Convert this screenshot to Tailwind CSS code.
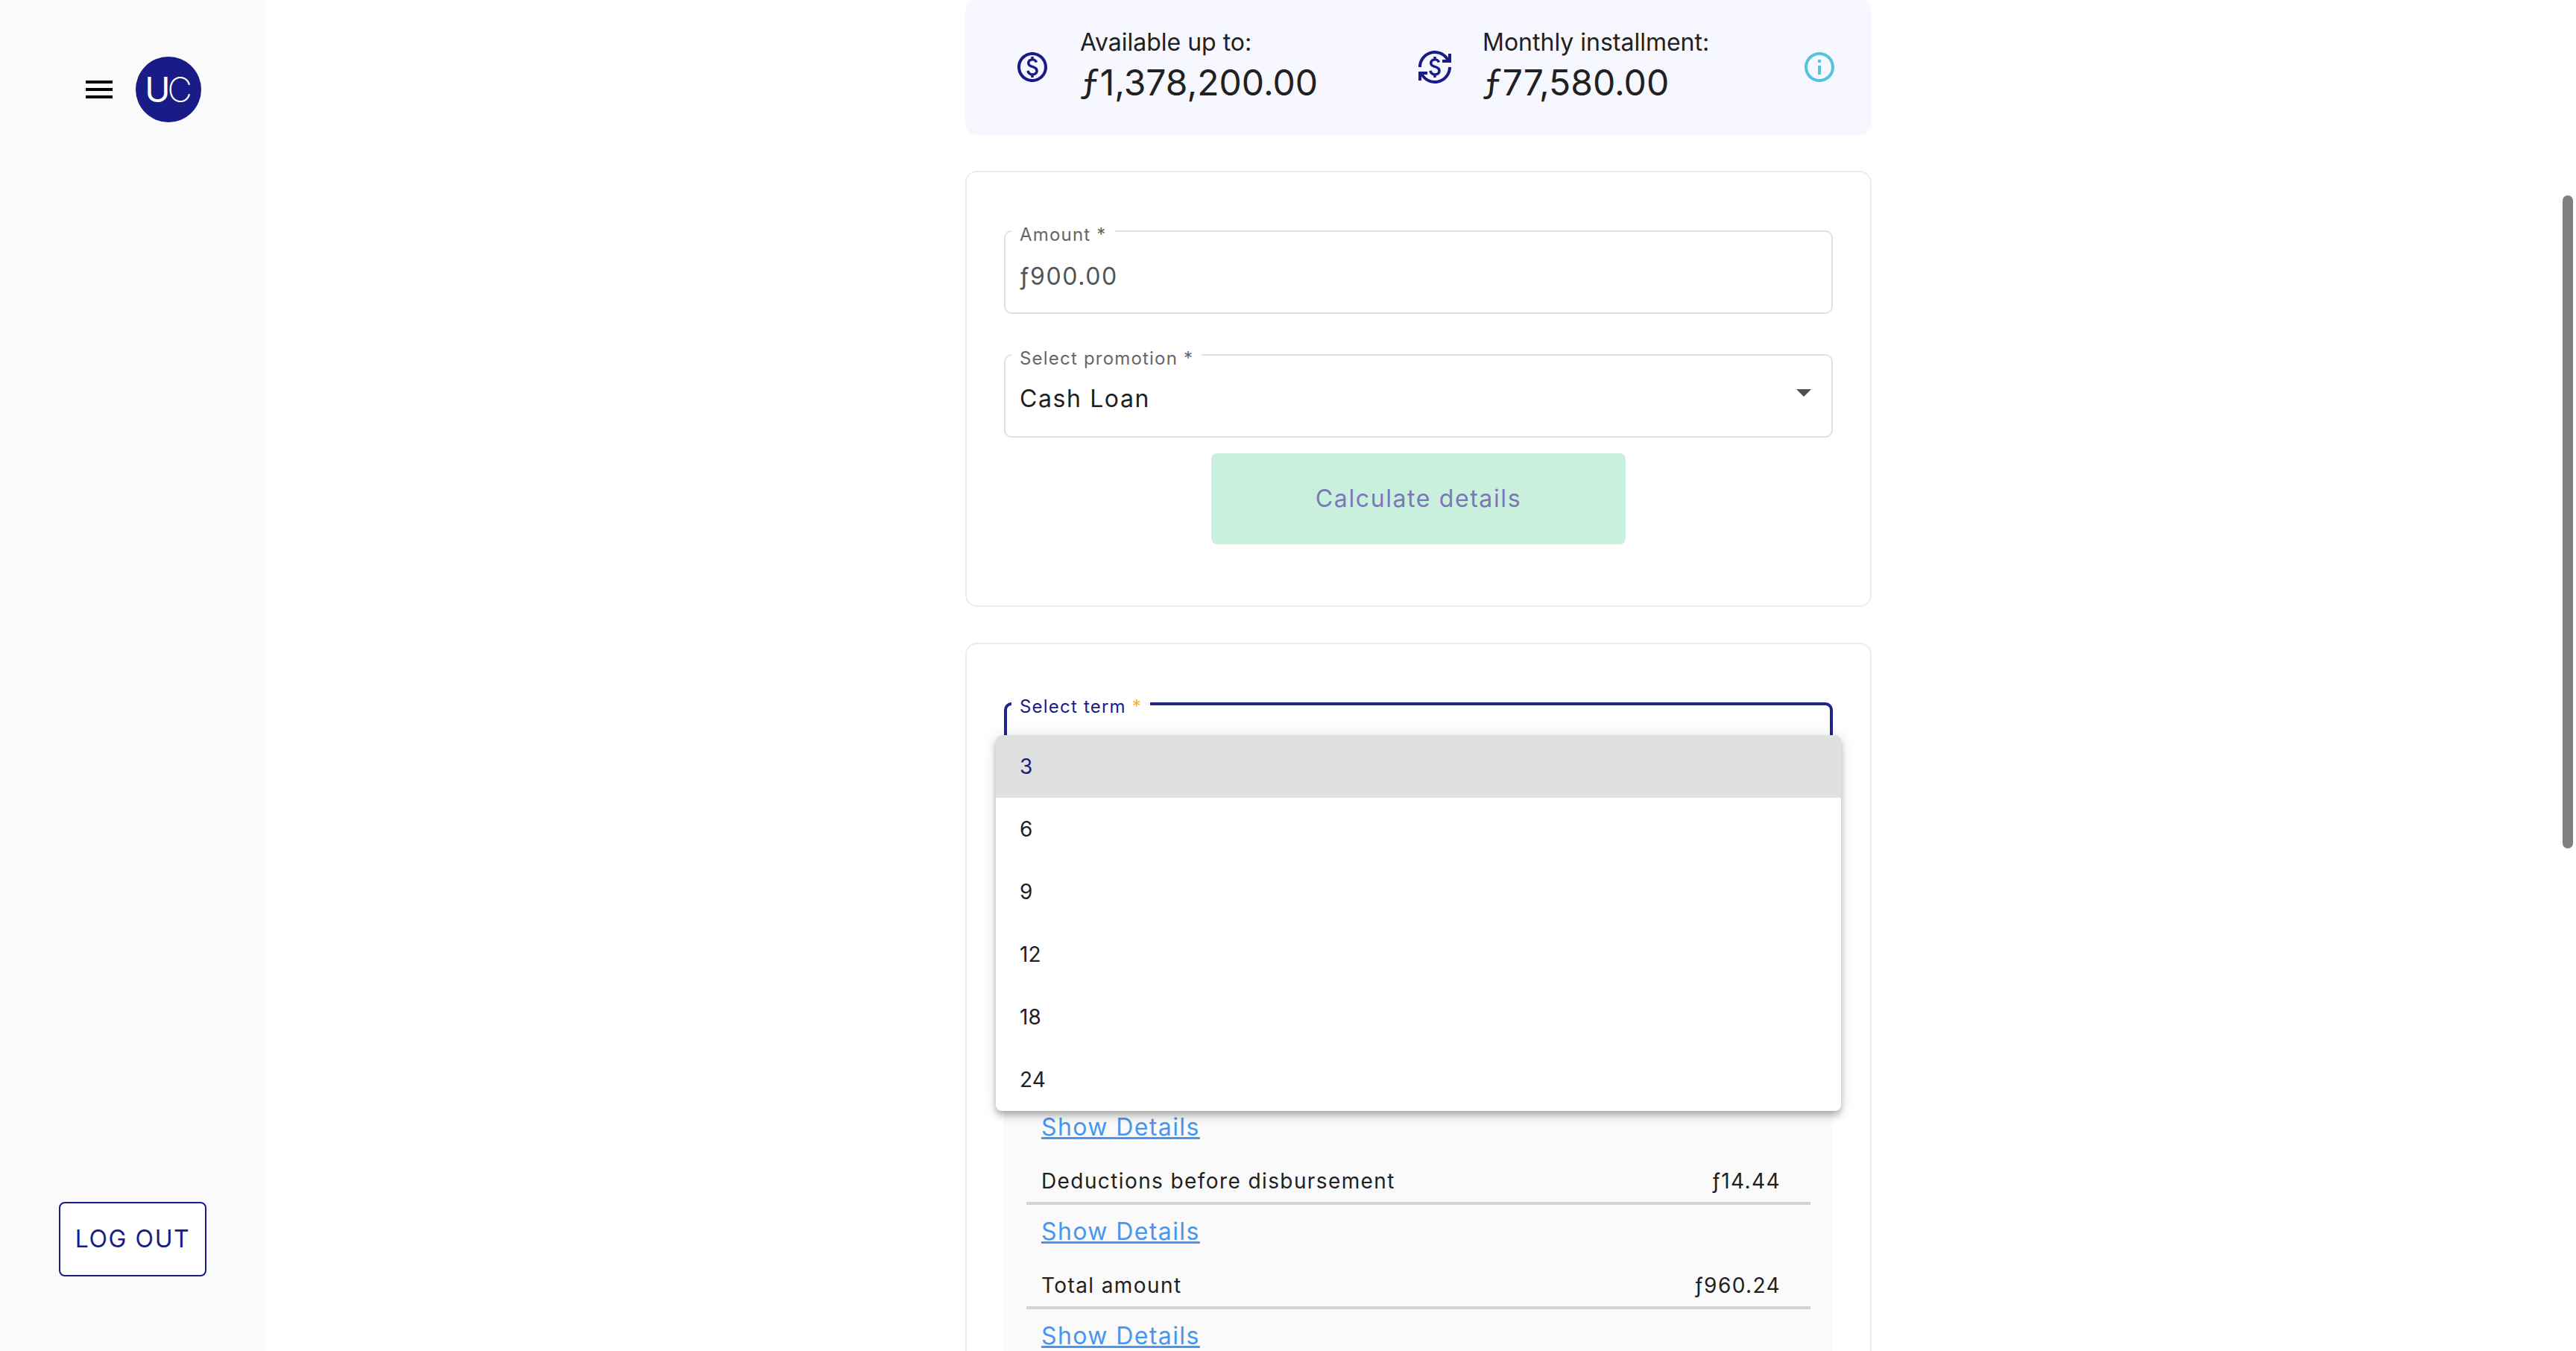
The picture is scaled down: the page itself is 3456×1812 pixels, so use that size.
<!DOCTYPE html>
<html lang="en">
<head>
<meta charset="utf-8">
<title>Cash loan</title>
<script src="https://cdn.jsdelivr.net/npm/@tailwindcss/browser@4"></script>
</head>
<body class="relative flex h-screen overflow-hidden bg-white font-['Inter',sans-serif] text-[#212121]">
  <aside class="flex w-[356px] shrink-0 flex-col justify-between bg-[#fafafa] pt-[76px] pb-[100px]">
    <div class="flex items-center gap-[25px] pl-[109px]">
      <button type="button" aria-label="Menu" class="text-black">
        <svg class="size-12" viewBox="0 0 24 24" fill="currentColor"><path d="M3 18h18v-2H3v2zm0-5h18v-2H3v2zm0-7v2h18V6H3z"/></svg>
      </button>
      <a href="#" aria-label="Home" class="flex size-[88px] items-center justify-center rounded-full bg-[#191c87] text-[46px] leading-none text-white">
        <span class="font-normal">U</span><span class="-ml-1 font-extralight">C</span>
      </a>
    </div>
    <button type="button" class="mx-auto h-[100px] w-[198px] rounded-lg border-2 border-[#191c87] bg-white text-[32px] tracking-wider text-[#191c87]">LOG OUT</button>
  </aside>

  <main class="flex flex-1 justify-center overflow-hidden pr-1.5">
    <div class="flex w-[1216px] shrink-0 flex-col gap-12">
      <section class="-mt-0.5 flex h-[183px] shrink-0 items-center rounded-2xl bg-[#f7f7ff] pr-[46px] pl-[66px]">
        <div class="flex w-[540px] items-center gap-10">
          <svg class="size-12 shrink-0 text-[#191c87]" viewBox="0 0 24 24" fill="currentColor"><path d="M12 2C6.48 2 2 6.48 2 12s4.48 10 10 10 10-4.48 10-10S17.52 2 12 2zm0 18c-4.41 0-8-3.59-8-8s3.59-8 8-8 8 3.59 8 8-3.59 8-8 8z"/><path d="M12.89 11.1c-1.78-.59-2.64-.96-2.64-1.9 0-1.02 1.11-1.39 1.81-1.39 1.31 0 1.79.99 1.9 1.34l1.58-.67c-.15-.44-.82-1.91-2.66-2.23V5h-1.75v1.26c-2.6.56-2.62 2.85-2.62 2.96 0 2.27 2.25 2.91 3.35 3.31 1.58.56 2.28 1.07 2.28 2.03 0 1.13-1.05 1.61-1.98 1.61-1.82 0-2.34-1.87-2.4-2.09L8.1 14.75c.63 2.19 2.28 2.78 3.02 2.96V19h1.75v-1.24c.52-.09 3.02-.59 3.02-3.22.01-1.39-.6-2.61-3-3.44z"/></svg>
          <div class="pb-1.5">
            <p class="text-[32px] leading-[48px]">Available up to:</p>
            <p class="text-5xl leading-[60px]"><span class="font-['Noto_Sans_CJK_SC',sans-serif] leading-none">ƒ</span>1,378,200.00</p>
          </div>
        </div>
        <div class="flex flex-1 items-center gap-10">
          <svg class="size-12 shrink-0 text-[#191c87]" viewBox="0 0 24 24" fill="currentColor"><path d="M12 21c-3.11 0-5.85-1.59-7.46-4H7v-2H1v6h2v-2.7c1.99 2.84 5.27 4.7 9 4.7 6.08 0 11-4.92 11-11h-2c0 4.97-4.03 9-9 9zM1 12h2c0-4.97 4.03-9 9-9 3.11 0 5.85 1.59 7.46 4H17v2h6V3h-2v2.7C19.01 2.86 15.73 1 12 1 5.93 1 1 5.93 1 12z"/><path d="M12.89 11.1c-1.78-.59-2.64-.96-2.64-1.9 0-1.02 1.11-1.39 1.81-1.39 1.31 0 1.79.99 1.9 1.34l1.58-.67c-.15-.44-.82-1.91-2.66-2.23V5h-1.75v1.26c-2.6.56-2.62 2.85-2.62 2.96 0 2.27 2.25 2.91 3.35 3.31 1.58.56 2.28 1.07 2.28 2.03 0 1.13-1.05 1.61-1.98 1.61-1.82 0-2.34-1.87-2.4-2.09L8.1 14.75c.63 2.19 2.28 2.78 3.02 2.96V19h1.75v-1.24c.52-.09 3.02-.59 3.02-3.22.01-1.39-.6-2.61-3-3.44z"/></svg>
          <div class="pb-1.5">
            <p class="text-[32px] leading-[48px]">Monthly installment:</p>
            <p class="text-5xl leading-[60px]"><span class="font-['Noto_Sans_CJK_SC',sans-serif] leading-none">ƒ</span>77,580.00</p>
          </div>
        </div>
        <button type="button" aria-label="More information" class="text-[#56c3de]">
          <svg class="size-12" viewBox="0 0 24 24" fill="currentColor"><path d="M11 7h2v2h-2zm0 4h2v6h-2zm1-9C6.48 2 2 6.48 2 12s4.48 10 10 10 10-4.48 10-10S17.52 2 12 2zm0 18c-4.41 0-8-3.59-8-8s3.59-8 8-8 8 3.59 8 8-3.59 8-8 8z"/></svg>
        </button>
      </section>

      <form class="flex shrink-0 flex-col rounded-2xl border-2 border-[#ececec] px-[50px] pt-[78px] pb-[82px]">
        <div class="relative">
          <input id="amount" type="text" value="ƒ900.00" class="block h-28 w-full rounded-[10px] border-2 border-[#e0e0e0] bg-transparent px-[19px] pt-2.5 text-[32px] tracking-wider text-[#4f565a]">
          <label for="amount" class="absolute -top-2 left-2.5 bg-white px-[11px] text-2xl leading-7 tracking-wider text-[#666]">Amount *</label>
        </div>
        <div class="relative mt-[54px]">
          <select id="promotion" class="block h-28 w-full appearance-none rounded-[10px] border-2 border-[#e0e0e0] bg-transparent px-[19px] pt-2 text-[32px] tracking-wider text-[#212121]"><option>Cash Loan</option></select>
          <label for="promotion" class="absolute -top-2 left-2.5 bg-white px-[11px] text-2xl leading-7 tracking-wider text-[#666]">Select promotion *</label>
          <svg class="pointer-events-none absolute top-[47px] right-[29px] h-2.5 w-5" viewBox="0 0 20 10"><path d="M0 0h20L10 10z" fill="#4a4f52"/></svg>
        </div>
        <button type="submit" class="mx-auto mt-[21px] h-[122px] w-1/2 rounded-lg bg-[#c9f0dc] text-[32px] tracking-wider text-[#7a78b8]">Calculate details</button>
      </form>

      <section class="flex shrink-0 flex-col rounded-2xl border-2 border-[#ececec] px-[50px] pt-[78px] pb-[82px]">
        <div class="relative">
          <select id="term" class="block h-28 w-full appearance-none rounded-[10px] border-4 border-[#20248f] bg-transparent px-[17px] pt-4 text-[32px] tracking-wider"><option>3</option></select>
          <label for="term" class="absolute -top-2 left-2.5 bg-white px-[11px] text-2xl leading-7 tracking-wider text-[#191c87]">Select term <span class="text-[#f0b040]">*</span></label>
          <ul role="listbox" aria-label="Select term" class="absolute top-11 -right-[11px] -left-[11px] z-10 overflow-hidden rounded-lg bg-white text-[28px] shadow-[0_4px_8px_-2px_rgba(0,0,0,0.2),0_8px_10px_0_rgba(0,0,0,0.14),0_2px_20px_0_rgba(0,0,0,0.12)]">
            <li role="option" aria-selected="true" class="flex h-21 items-center bg-[#e0e0e0] px-8 text-[#191c87]">3</li>
            <li role="option" class="flex h-21 items-center px-8">6</li>
            <li role="option" class="flex h-21 items-center px-8">9</li>
            <li role="option" class="flex h-21 items-center px-8">12</li>
            <li role="option" class="flex h-21 items-center px-8">18</li>
            <li role="option" class="flex h-21 items-center px-8">24</li>
          </ul>
        </div>
        <div class="mt-[54px] bg-[#fafafa] px-[30px] pt-[368px] pb-8">
          <table class="w-full border-collapse text-[28px] leading-10 tracking-wider">
            <tbody>
              <tr><td colspan="2" class="px-5 pt-3 text-[32px] leading-[48px]"><a href="#" class="text-[#4996ee] underline decoration-3">Show Details</a></td></tr>
              <tr class="border-b-4 border-[#d4d4d4]"><td class="px-5 pt-7 pb-2">Deductions before disbursement</td><td class="pt-7 pr-10 pb-2 text-right">ƒ14.44</td></tr>
              <tr><td colspan="2" class="px-5 pt-3 text-[32px] leading-[48px]"><a href="#" class="text-[#4996ee] underline decoration-3">Show Details</a></td></tr>
              <tr class="border-b-4 border-[#d4d4d4]"><td class="px-5 pt-7 pb-2">Total amount</td><td class="pt-7 pr-10 pb-2 text-right">ƒ960.24</td></tr>
              <tr><td colspan="2" class="px-5 pt-3 text-[32px] leading-[48px]"><a href="#" class="text-[#4996ee] underline decoration-3">Show Details</a></td></tr>
            </tbody>
          </table>
        </div>
      </section>
    </div>
  </main>

  <div class="absolute top-[262px] right-1 h-[876px] w-3.5 rounded-full bg-[#808080]"></div>
</body>
</html>
